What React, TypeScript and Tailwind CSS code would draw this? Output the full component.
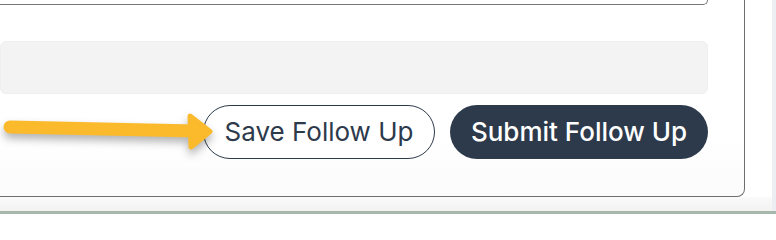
import React from "react";

export default function App() {
  return (
    <div
      className="relative w-[776px] h-[214px] overflow-hidden bg-white"
      style={{ fontFamily: "Inter, 'Noto Sans', sans-serif" }}
    >
      <div className="flex h-[211px]">
        <div className="flex w-[772px] flex-col">
          {/* card */}
          <div className="flex h-[197px] w-[745px] flex-col rounded-br-[8px] border-r border-b border-[#6e6e6e] bg-gradient-to-b from-white from-70% to-[#fbfbfb] pr-[36px]">
            <div className="h-[5px] w-[708px] rounded-br-[6px] border-r border-b border-[#777777]" />
            <div className="mt-[36px] h-[53px] w-[708px] rounded-[6px] border border-[#efefef] bg-[#f3f3f3]" />
            <div className="mt-[11px] flex justify-end gap-[15px]">
              <button className="flex h-[54px] w-[232px] items-center justify-center rounded-full border border-[#2d3a4b] bg-white text-[26px] leading-none text-[#2d3a4b]">
                Save Follow Up
              </button>
              <button className="flex h-[54px] w-[258px] items-center justify-center rounded-full bg-[#2d3a4b] text-[26px] leading-none font-medium text-white">
                Submit Follow Up
              </button>
            </div>
          </div>
          <div className="h-[14px] bg-gradient-to-b from-[#fafafa] to-[#f2f2f2]" />
        </div>
        <div className="w-[4px] bg-[#eceef4]" />
      </div>
      <div className="h-[3px] bg-[#a7b7ab]" />

      {/* annotation arrow */}
      <svg
        className="absolute left-0 top-[105px] drop-shadow-[0_5px_4px_rgba(0,0,0,0.3)]"
        width="220"
        height="50"
        viewBox="0 105 220 50"
      >
        <line
          x1="10"
          y1="127"
          x2="196"
          y2="131"
          stroke="#fbba2b"
          strokeWidth="13"
          strokeLinecap="round"
        />
        <polygon
          points="190,116 210,131.5 191,147"
          fill="#fbba2b"
          stroke="#fbba2b"
          strokeWidth="5"
          strokeLinejoin="round"
        />
      </svg>
    </div>
  );
}
